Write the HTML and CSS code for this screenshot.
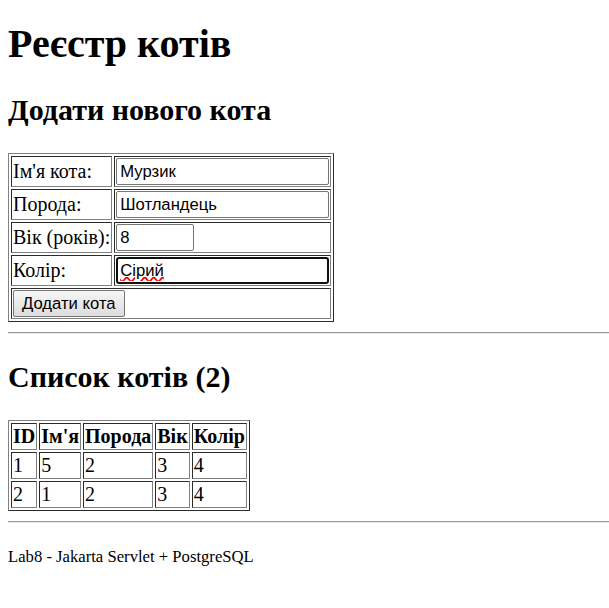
FILE: index.html
```html
<!DOCTYPE html>
<html lang="uk">
<head>
<meta charset="utf-8">
<title>Реєстр котів</title>
<link rel="stylesheet" href="styles.css">
</head>
<body>
<h1>Реєстр котів</h1>
<h2>Додати нового кота</h2>
<form class="cat-form">
<table class="grid">
<tr><td>Ім'я кота:</td><td><input class="field wide" type="text" value="Мурзик"></td></tr>
<tr><td>Порода:</td><td><input class="field wide" type="text" value="Шотландець"></td></tr>
<tr><td>Вік (років):</td><td><input class="field narrow" type="text" value="8"></td></tr>
<tr><td>Колір:</td><td><input class="field wide focused" type="text" value="Сірий"></td></tr>
<tr><td colspan="2"><button class="btn" type="button">Додати кота</button></td></tr>
</table>
</form>
<hr class="rule">
<h2>Список котів (2)</h2>
<table class="grid">
<tr><th>ID</th><th>Ім'я</th><th>Порода</th><th>Вік</th><th>Колір</th></tr>
<tr><td>1</td><td>5</td><td>2</td><td>3</td><td>4</td></tr>
<tr><td>2</td><td>1</td><td>2</td><td>3</td><td>4</td></tr>
</table>
<hr class="rule">
<p class="footer">Lab8 - Jakarta Servlet + PostgreSQL</p>
</body>
</html>
```
FILE: styles.css
```css
body {
  margin: 0 0 8px 8px;
  font-family: "Liberation Serif", "Times New Roman", serif;
  font-size: 20px;
  line-height: 23px;
  color: #000;
  background: #fff;
}
h1 {
  font-size: 40px;
  line-height: 46px;
  margin: 21px 0 26px;
}
h2 {
  font-size: 30px;
  line-height: 34px;
  margin: 26px 0;
}
.cat-form { margin: 0; }
.grid {
  border: 1px outset #808080;
  border-spacing: 2px;
}
.grid td, .grid th {
  border: 1px inset #808080;
  padding: 1px;
  text-align: left;
}
.field {
  font-family: "Liberation Sans", Arial, sans-serif;
  font-size: 16.67px;
  padding: 1px 3px;
  border: 1px solid #767676;
  border-radius: 2px;
  box-sizing: border-box;
  height: 27px;
  margin: 0;
  vertical-align: middle;
}
.wide { width: 213px; }
.narrow { width: 78px; }
.focused {
  border: 2px solid #101010;
  border-radius: 3px;
  padding: 0 2px;
  text-decoration: underline wavy #e00;
  text-underline-offset: 1px;
}
.btn {
  font-family: "Liberation Sans", Arial, sans-serif;
  font-size: 16.67px;
  height: 27px;
  padding: 0 8px;
  border: 1px solid #767676;
  border-radius: 2px;
  background: linear-gradient(#f6f6f6, #dcdcdc);
  margin: 0;
  vertical-align: middle;
}
.rule {
  border: 0;
  border-top: 1px solid #9a9a9a;
  border-bottom: 1px solid #e6e6e6;
  margin: 10px 0;
}
.footer {
  font-size: 16.67px;
  line-height: 19px;
  margin: 24px 0;
}
```
